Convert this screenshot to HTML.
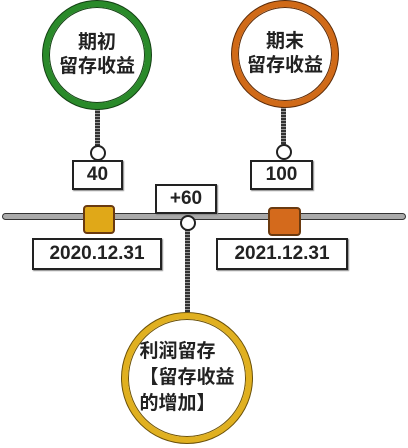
<!DOCTYPE html>
<html><head><meta charset="utf-8"><style>
body{margin:0;width:408px;height:448px;background:#fff;position:relative;overflow:hidden;font-family:"Liberation Sans","Noto Sans CJK SC",sans-serif;}
.c{position:absolute;border-radius:50%;background:#fff;box-sizing:border-box;display:flex;align-items:center;justify-content:center;text-align:center;font-weight:bold;color:#222;}
.b{position:absolute;box-sizing:border-box;border:2px solid #222;background:#fff;display:flex;align-items:center;justify-content:center;font-weight:bold;color:#222;box-shadow:1px 1px 1px #888;}
.ch{position:absolute;width:5px;background:repeating-linear-gradient(#333 0 2px,#999 2px 3px);}
.r{position:absolute;width:12px;height:12px;border:2px solid #222;border-radius:50%;background:#fff;}
.sq{position:absolute;border:2px solid #6a3a10;border-radius:4px;}
</style></head><body>
<div style="position:absolute;left:2px;top:213px;width:404px;height:7px;background:#aaa;border:1.5px solid #333;border-radius:4px;box-sizing:border-box;"></div>
<div class="ch" style="left:95px;top:108px;height:40px"></div>
<div class="ch" style="left:281px;top:106px;height:40px"></div>
<div class="ch" style="left:185px;top:226px;height:88px"></div>
<div class="r" style="left:90px;top:145px"></div>
<div class="r" style="left:276px;top:144px"></div>
<div class="c" style="left:43px;top:1px;width:108px;height:108px;border:6px solid #2a8a2a;box-shadow:0 0 0 1px #134013,inset 0 0 0 1px #134013;font-size:19px;line-height:24px;">期初<br>留存收益</div>
<div class="c" style="left:232px;top:1px;width:106px;height:106px;border:6px solid #d06a18;box-shadow:0 0 0 1px #5a2a08,inset 0 0 0 1px #5a2a08;font-size:19px;line-height:24px;">期末<br>留存收益</div>
<div class="b" style="left:72px;top:160px;width:51px;height:30px;font-size:19px;">40</div>
<div class="b" style="left:250px;top:160px;width:63px;height:30px;font-size:19px;">100</div>
<div class="sq" style="left:83px;top:205px;width:28px;height:25px;background:#e0a818;"></div>
<div class="sq" style="left:268px;top:207px;width:29px;height:25px;background:#d46a1c;"></div>
<div class="b" style="left:155px;top:184px;width:62px;height:30px;font-size:19px;">+60</div>
<div class="r" style="left:180px;top:215px"></div>
<div class="b" style="left:32px;top:238px;width:130px;height:32px;font-size:19px;">2020.12.31</div>
<div class="b" style="left:216px;top:238px;width:132px;height:32px;font-size:19px;">2021.12.31</div>
<div class="c" style="left:122px;top:313px;width:130px;height:130px;border:6px solid #e0b020;box-shadow:0 0 0 1px #6a5008,inset 0 0 0 1px #6a5008;font-size:19px;line-height:26px;text-align:left;">利润留存<br>【留存收益<br>的增加】</div>
</body></html>
